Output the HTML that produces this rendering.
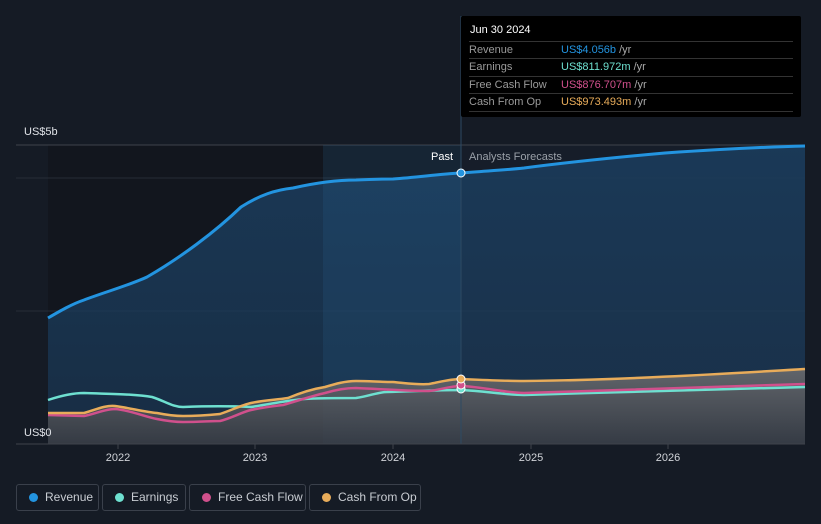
<!DOCTYPE html>
<html><head><meta charset="utf-8"><style>
html,body{margin:0;padding:0;background:#151b25;width:821px;height:524px;overflow:hidden;font-family:"Liberation Sans",sans-serif}
svg{position:absolute;left:0;top:0}
.tip{position:absolute;left:461px;top:16px;width:340px;height:101px;background:#000;border-radius:2px;color:#fff;font-size:11px}
.tip .h{position:absolute;left:9px;top:8px;font-size:11px}
.row{position:absolute;left:8px;width:324px;height:17px;border-top:1px solid #333;line-height:17px;color:#9a9a9a}
.row span{position:absolute;left:92px}
.row i{font-style:normal;color:#aaa}
.leg{position:absolute;top:484px;height:25px;border:1px solid #3a404b;border-radius:3px;color:#c8ccd2;font-size:12px;line-height:25px;box-sizing:content-box}
.leg b{position:absolute;left:12px;top:8px;width:9px;height:9px;border-radius:50%}
.leg span{position:absolute;left:28px}
</style></head><body>
<svg width="821" height="524" viewBox="0 0 821 524">
<defs>
<linearGradient id="rg" x1="0" y1="0" x2="0" y2="1"><stop offset="0" stop-color="#1b3c5c" stop-opacity=".9"/><stop offset="1" stop-color="#1b3c5c" stop-opacity=".6"/></linearGradient>
<linearGradient id="gg" x1="0" y1="0" x2="0" y2="1"><stop offset="0" stop-color="#6e6e70"/><stop offset="1" stop-color="#3a3d44"/></linearGradient>
</defs>
<rect x="48" y="145" width="413" height="299" fill="#12161e"/>
<rect x="461" y="145" width="344" height="299" fill="#161d29"/>
<line x1="16" y1="145" x2="805" y2="145" stroke="#3e434c" stroke-width="1"/>
<line x1="16" y1="178" x2="805" y2="178" stroke="#262c36"/>
<line x1="16" y1="311" x2="805" y2="311" stroke="#262c36"/>
<path d="M48,318 C60,311 72,304 84,300 C105,292 130,285 147,277 C180,258 215,232 241,207 C260,195 275,190 293,188 C315,183 335,180 356,180 C375,179 385,179 393,179 C420,177 440,174 461,173 C485,171 505,170 524,168 C570,162 620,157 665,153 C710,150 760,147 805,146 L805,444 L48,444Z" fill="url(#rg)"/>
<rect x="323" y="145" width="138" height="299" fill="#2a6a9a" opacity=".18"/>
<path d="M48,413 L84,413 C95,410 105,405 115,406 C130,408 145,412 157,413 C167,415 175,416 183,416 C200,416 210,415 220,414 C232,410 242,405 251,403 C265,400 275,400 288,398 C300,393 312,389 325,387 C335,384 345,381 356,381 C370,381 380,382 393,382 C405,383 418,385 429,384 C440,382 450,379 461,379 C485,380 505,381 524,381 C620,380 720,374 805,369 L805,444 L48,444Z" fill="url(#gg)" opacity=".85"/>
<path d="M48,400 C60,396 72,393 84,393 C110,394 135,394 152,397 C165,401 172,407 183,407 C210,406 230,406 251,407 C270,404 290,400 304,399 C320,398 340,398 356,398 C370,396 378,392 387,392 C420,391 440,390 461,390 C485,391 505,395 524,395 C620,392 720,389 805,387" fill="none" stroke="#6ee0d0" stroke-width="2.5"/>
<path d="M48,415 L84,416 C95,414 105,409 115,409 C130,410 145,417 157,419 C167,421 175,422 183,422 C200,422 210,421 220,421 C232,418 242,412 251,410 C265,407 275,406 283,405 C300,400 312,396 325,393 C335,390 345,388 356,388 C380,389 410,391 429,391 C440,390 450,386 461,386 C485,387 505,393 524,393 C620,390 720,387 805,384" fill="none" stroke="#d0508c" stroke-width="2.5"/>
<path d="M48,413 L84,413 C95,410 105,405 115,406 C130,408 145,412 157,413 C167,415 175,416 183,416 C200,416 210,415 220,414 C232,410 242,405 251,403 C265,400 275,400 288,398 C300,393 312,389 325,387 C335,384 345,381 356,381 C370,381 380,382 393,382 C405,383 418,385 429,384 C440,382 450,379 461,379 C485,380 505,381 524,381 C620,380 720,374 805,369" fill="none" stroke="#e8ac5a" stroke-width="2.5"/>
<path d="M48,318 C60,311 72,304 84,300 C105,292 130,285 147,277 C180,258 215,232 241,207 C260,195 275,190 293,188 C315,183 335,180 356,180 C375,179 385,179 393,179 C420,177 440,174 461,173 C485,171 505,170 524,168 C570,162 620,157 665,153 C710,150 760,147 805,146" fill="none" stroke="#2394e0" stroke-width="3"/>
<line x1="461" y1="16" x2="461" y2="444" stroke="#2d4a63" stroke-width="1"/>
<line x1="16" y1="444" x2="805" y2="444" stroke="#3e434c"/>
<circle cx="461" cy="389" r="4" fill="#6ee0d0" stroke="#fff" stroke-width="1"/>
<circle cx="461" cy="385" r="4" fill="#d0508c" stroke="#fff" stroke-width="1"/>
<circle cx="461" cy="379" r="4" fill="#e8ac5a" stroke="#fff" stroke-width="1"/>
<circle cx="461" cy="173" r="4" fill="#2394e0" stroke="#fff" stroke-width="1"/>
<g stroke="#3e434c"><line x1="118" y1="444" x2="118" y2="449"/><line x1="255" y1="444" x2="255" y2="449"/><line x1="393" y1="444" x2="393" y2="449"/><line x1="531" y1="444" x2="531" y2="449"/><line x1="668" y1="444" x2="668" y2="449"/></g>
<g font-family="Liberation Sans, sans-serif" font-size="11" fill="#d0d3d8" text-anchor="middle">
<text x="118" y="461">2022</text><text x="255" y="461">2023</text><text x="393" y="461">2024</text><text x="531" y="461">2025</text><text x="668" y="461">2026</text>
</g>
<text x="24" y="135" font-family="Liberation Sans, sans-serif" font-size="11" fill="#e0e3e8">US$5b</text>
<text x="24" y="436" font-family="Liberation Sans, sans-serif" font-size="11" fill="#e0e3e8">US$0</text>
<text x="453" y="160" text-anchor="end" font-family="Liberation Sans, sans-serif" font-size="11" fill="#fff">Past</text>
<text x="469" y="160" font-family="Liberation Sans, sans-serif" font-size="11" fill="#9aa0a8">Analysts Forecasts</text>
</svg>
<div class="tip">
<div class="h">Jun 30 2024</div>
<div class="row" style="top:25px">Revenue<span><em style="font-style:normal;color:#2394e0">US$4.056b</em> <i>/yr</i></span></div>
<div class="row" style="top:42px">Earnings<span><em style="font-style:normal;color:#6ee0d0">US$811.972m</em> <i>/yr</i></span></div>
<div class="row" style="top:60px">Free Cash Flow<span><em style="font-style:normal;color:#d0508c">US$876.707m</em> <i>/yr</i></span></div>
<div class="row" style="top:77px">Cash From Op<span><em style="font-style:normal;color:#e8ac5a">US$973.493m</em> <i>/yr</i></span></div>
<div class="row" style="top:95px;height:0"></div>
</div>
<div class="leg" style="left:16px;width:81px"><b style="background:#2394e0"></b><span>Revenue</span></div>
<div class="leg" style="left:102px;width:82px"><b style="background:#6ee0d0"></b><span>Earnings</span></div>
<div class="leg" style="left:189px;width:115px"><b style="background:#d0508c"></b><span>Free Cash Flow</span></div>
<div class="leg" style="left:309px;width:110px"><b style="background:#e8ac5a"></b><span>Cash From Op</span></div>
</body></html>
